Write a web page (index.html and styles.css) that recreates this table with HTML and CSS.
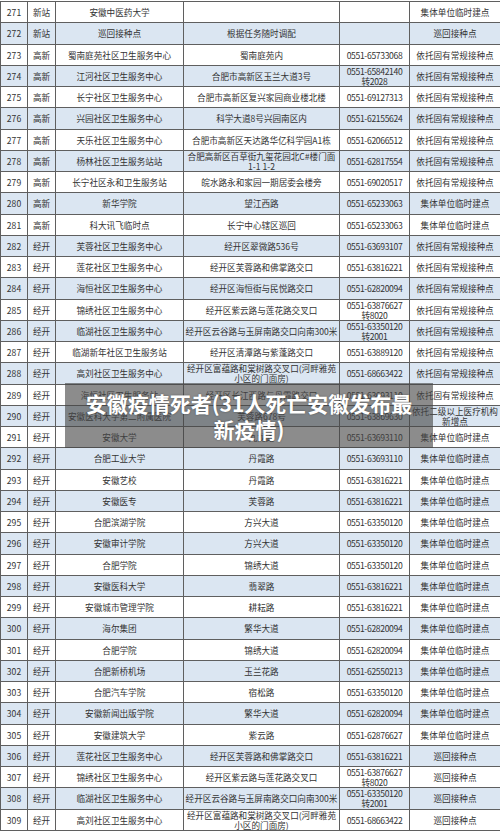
FILE: index.html
```html
<!DOCTYPE html>
<html lang="zh-CN">
<head>
<meta charset="utf-8">
<title>安徽疫情</title>
<link rel="stylesheet" href="styles.css">
</head>
<body>
<div class="page">
<table class="grid">
<colgroup>
<col class="c1"><col class="c2"><col class="c3"><col class="c4"><col class="c5"><col class="c6">
</colgroup>
<tbody>
<tr><td>271</td><td>新站</td><td>安徽中医药大学</td><td></td><td></td><td>集体单位临时建点</td></tr>
<tr class="alt"><td>272</td><td>新站</td><td>巡回接种点</td><td>根据任务随时调配</td><td></td><td>巡回接种点</td></tr>
<tr><td>273</td><td>高新</td><td>蜀南庭苑社区卫生服务中心</td><td>蜀南庭苑内</td><td class="ph">0551-65733068</td><td>依托固有常规接种点</td></tr>
<tr class="alt"><td>274</td><td>高新</td><td>江河社区卫生服务中心</td><td>合肥市高新区玉兰大道3号</td><td class="ph">0551-65842140<br>转2028</td><td>依托固有常规接种点</td></tr>
<tr><td>275</td><td>高新</td><td>长宁社区卫生服务中心</td><td>合肥市高新区复兴家园商业楼北楼</td><td class="ph">0551-69127313</td><td>依托固有常规接种点</td></tr>
<tr class="alt"><td>276</td><td>高新</td><td>兴园社区卫生服务中心</td><td>科学大道8号兴园南区内</td><td class="ph">0551-62155624</td><td>依托固有常规接种点</td></tr>
<tr><td>277</td><td>高新</td><td>天乐社区卫生服务中心</td><td>合肥市高新区天达路华亿科学园A1栋</td><td class="ph">0551-62066512</td><td>依托固有常规接种点</td></tr>
<tr class="alt"><td>278</td><td>高新</td><td>杨林社区卫生服务站站</td><td>合肥高新区百草街九玺花园北C#楼门面<br>1-1 1-2</td><td class="ph">0551-62817554</td><td>依托固有常规接种点</td></tr>
<tr><td>279</td><td>高新</td><td>长宁社区永和卫生服务站</td><td>皖水路永和家园一期居委会楼旁</td><td class="ph">0551-69020517</td><td>依托固有常规接种点</td></tr>
<tr class="alt"><td>280</td><td>高新</td><td>新华学院</td><td>望江西路</td><td class="ph">0551-65233063</td><td>集体单位临时建点</td></tr>
<tr><td>281</td><td>高新</td><td>科大讯飞临时点</td><td>长宁中心辖区巡回</td><td class="ph">0551-65233063</td><td>集体单位临时建点</td></tr>
<tr class="alt"><td>282</td><td>经开</td><td>芙蓉社区卫生服务中心</td><td>经开区翠微路536号</td><td class="ph">0551-63693107</td><td>依托固有常规接种点</td></tr>
<tr><td>283</td><td>经开</td><td>莲花社区卫生服务中心</td><td>经开区芙蓉路和佛掌路交口</td><td class="ph">0551-63816221</td><td>依托固有常规接种点</td></tr>
<tr class="alt"><td>284</td><td>经开</td><td>海恒社区卫生服务中心</td><td>经开区海恒街与民悦路交口</td><td class="ph">0551-62820094</td><td>依托固有常规接种点</td></tr>
<tr><td>285</td><td>经开</td><td>锦绣社区卫生服务中心</td><td>经开区紫云路与莲花路交叉口</td><td class="ph">0551-63876627<br>转8020</td><td>依托固有常规接种点</td></tr>
<tr class="alt"><td>286</td><td>经开</td><td>临湖社区卫生服务中心</td><td>经开区云谷路与玉屏南路交口向南300米</td><td class="ph">0551-63350120<br>转2001</td><td>依托固有常规接种点</td></tr>
<tr><td>287</td><td>经开</td><td>临湖新年社区卫生服务站</td><td>经开区清潭路与紫蓬路交口</td><td class="ph">0551-63889120</td><td>依托固有常规接种点</td></tr>
<tr class="alt"><td>288</td><td>经开</td><td>高刘社区卫生服务中心</td><td>经开区富蕴路和棠树路交叉口(河畔雅苑<br>小区的门面房)</td><td class="ph">0551-68663422</td><td>依托固有常规接种点</td></tr>
<tr><td>289</td><td>经开</td><td>海恒社区卫生服务站</td><td>经开区长江西路与丹霞路交口</td><td class="ph">0551-63693110</td><td>依托固有常规接种点</td></tr>
<tr class="alt"><td>290</td><td>经开</td><td>安徽医科大学第二附属医院</td><td>芙蓉路678号</td><td class="ph">0551-63869630</td><td>依托二级以上医疗机构<br>新增点</td></tr>
<tr><td>291</td><td>经开</td><td>安徽大学</td><td>九龙路</td><td class="ph">0551-63693110</td><td>集体单位临时建点</td></tr>
<tr class="alt"><td>292</td><td>经开</td><td>合肥工业大学</td><td>丹霞路</td><td class="ph">0551-63693110</td><td>集体单位临时建点</td></tr>
<tr><td>293</td><td>经开</td><td>安徽艺校</td><td>丹霞路</td><td class="ph">0551-63816221</td><td>集体单位临时建点</td></tr>
<tr class="alt"><td>294</td><td>经开</td><td>安徽医专</td><td>芙蓉路</td><td class="ph">0551-63816221</td><td>集体单位临时建点</td></tr>
<tr><td>295</td><td>经开</td><td>合肥滨湖学院</td><td>方兴大道</td><td class="ph">0551-63350120</td><td>集体单位临时建点</td></tr>
<tr class="alt"><td>296</td><td>经开</td><td>安徽审计学院</td><td>方兴大道</td><td class="ph">0551-63350120</td><td>集体单位临时建点</td></tr>
<tr><td>297</td><td>经开</td><td>合肥学院</td><td>锦绣大道</td><td class="ph">0551-63350120</td><td>集体单位临时建点</td></tr>
<tr class="alt"><td>298</td><td>经开</td><td>安徽医科大学</td><td>翡翠路</td><td class="ph">0551-63816221</td><td>集体单位临时建点</td></tr>
<tr><td>299</td><td>经开</td><td>安徽城市管理学院</td><td>耕耘路</td><td class="ph">0551-63816221</td><td>集体单位临时建点</td></tr>
<tr class="alt"><td>300</td><td>经开</td><td>海尔集团</td><td>繁华大道</td><td class="ph">0551-62820094</td><td>集体单位临时建点</td></tr>
<tr><td>301</td><td>经开</td><td>合肥学院</td><td>锦绣大道</td><td class="ph">0551-62820094</td><td>集体单位临时建点</td></tr>
<tr class="alt"><td>302</td><td>经开</td><td>合肥新桥机场</td><td>玉兰花路</td><td class="ph">0551-62550213</td><td>集体单位临时建点</td></tr>
<tr><td>303</td><td>经开</td><td>合肥汽车学院</td><td>宿松路</td><td class="ph">0551-63350120</td><td>集体单位临时建点</td></tr>
<tr class="alt"><td>304</td><td>经开</td><td>安徽新闻出版学院</td><td>繁华大道</td><td class="ph">0551-62820094</td><td>集体单位临时建点</td></tr>
<tr><td>305</td><td>经开</td><td>安徽建筑大学</td><td>紫云路</td><td class="ph">0551-62876627</td><td>集体单位临时建点</td></tr>
<tr class="alt"><td>306</td><td>经开</td><td>莲花社区卫生服务中心</td><td>经开区芙蓉路和佛掌路交口</td><td class="ph">0551-63816221</td><td>巡回接种点</td></tr>
<tr><td>307</td><td>经开</td><td>锦绣社区卫生服务中心</td><td>经开区紫云路与莲花路交叉口</td><td class="ph">0551-63876627<br>转8020</td><td>巡回接种点</td></tr>
<tr class="alt"><td>308</td><td>经开</td><td>临湖社区卫生服务中心</td><td>经开区云谷路与玉屏南路交口向南300米</td><td class="ph">0551-63350120<br>转2001</td><td>巡回接种点</td></tr>
<tr><td>309</td><td>经开</td><td>高刘社区卫生服务中心</td><td>经开区富蕴路和棠树路交叉口(河畔雅苑<br>小区的门面房)</td><td class="ph">0551-68663422</td><td>巡回接种点</td></tr>
</tbody>
</table>
<div class="banner">安徽疫情死者(31人死亡安徽发布最<br>新疫情)</div>
</div>
</body>
</html>
```
FILE: styles.css
```css
html, body {
  margin: 0;
  padding: 0;
  background: #ffffff;
}
.page {
  position: relative;
  width: 500px;
  height: 831px;
  overflow: hidden;
  padding-top: 1px;
  box-sizing: border-box;
}
.grid {
  width: 500px;
  border-collapse: collapse;
  table-layout: fixed;
  font-family: "Noto Sans CJK SC", "Noto Sans", sans-serif;
  font-size: 8.6px;
  color: #333333;
}
.c1 { width: 27px; }
.c2 { width: 28px; }
.c3 { width: 128px; }
.c4 { width: 156px; }
.c5 { width: 70px; }
.c6 { width: 91px; }
.grid td {
  height: 20.25px;
  padding: 0 1px;
  border: 1px solid #5f5f5f;
  text-align: center;
  vertical-align: middle;
  line-height: 10px;
  white-space: nowrap;
  overflow: hidden;
}
.grid tr.alt td {
  background: #dbe6f2;
}
.grid td.ph {
  letter-spacing: -0.35px;
}
.banner {
  position: absolute;
  left: 65px;
  top: 383px;
  width: 368px;
  height: 65px;
  background: rgba(70, 70, 70, 0.62);
  color: #ffffff;
  font-family: "Noto Sans CJK SC", "Noto Sans", sans-serif;
  font-weight: 700;
  font-size: 21px;
  line-height: 26px;
  text-align: center;
  display: flex;
  align-items: center;
  justify-content: center;
  text-shadow: 0 0 2px rgba(0,0,0,0.4);
}
```
